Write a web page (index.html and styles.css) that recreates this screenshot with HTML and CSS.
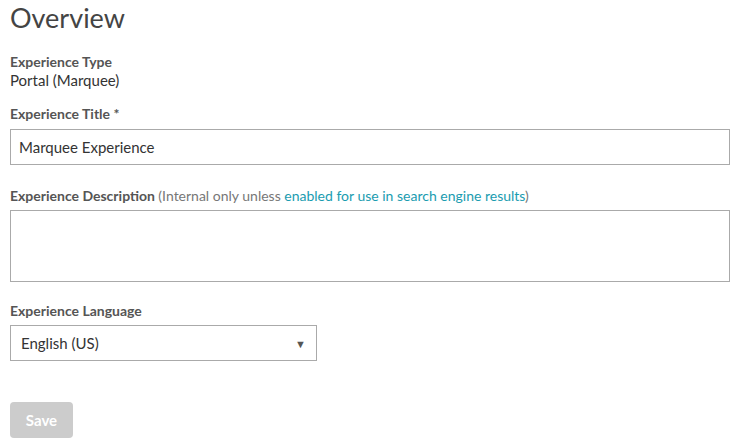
FILE: index.html
```html
<!DOCTYPE html>
<html>
<head>
<meta charset="utf-8">
<link rel="stylesheet" href="styles.css">
</head>
<body>
<div class="page">
  <h1 class="title">Overview</h1>
  <div class="field static">
    <div class="label">Experience Type</div>
    <div class="value">Portal (Marquee)</div>
  </div>
  <div class="field">
    <div class="label">Experience Title *</div>
    <div class="input">Marquee Experience</div>
  </div>
  <div class="field">
    <div class="label tight">Experience Description <span class="hint">(Internal only unless <span class="link">enabled for use in search engine results</span>)</span></div>
    <div class="textarea"></div>
  </div>
  <div class="field">
    <div class="label tight">Experience Language</div>
    <div class="select"><span>English (US)</span><span class="caret">▼</span></div>
  </div>
  <div class="actions">
    <button class="btn">Save</button>
  </div>
</div>
</body>
</html>
```
FILE: styles.css
```css
* { box-sizing: border-box; }
html, body { margin: 0; padding: 0; background: #fff; }
body { font-family: Lato, "Open Sans", sans-serif; color: #333; }
.page { padding: 0 9px 0 10px; display: flex; flex-direction: column; }
.title { margin: 0; font-weight: 400; font-size: 27px; line-height: 34px; color: #444; margin-top: 1px; }
.field { display: flex; flex-direction: column; }
.static { margin-top: 17px; }
.label { font-size: 14px; font-weight: 700; color: #555; line-height: 19px; margin-bottom: 6px; }
.label.tight { margin-bottom: 5px; }
.static .label { margin-bottom: 0; }
.value { font-size: 15px; color: #333; line-height: 19px; margin-bottom: 14px; }
.hint { font-weight: 400; color: #777; font-size: 14px; }
.link { color: #1a9cb0; }
.input { height: 36px; border: 1px solid #aaa; font-size: 15px; padding: 0 8px; display: flex; align-items: center; color: #333; margin-bottom: 21px; }
.textarea { height: 72px; border: 1px solid #aaa; margin-bottom: 19px; }
.select { width: 307px; height: 36px; border: 1px solid #aaa; font-size: 15px; padding: 0 10px; display: flex; align-items: center; justify-content: space-between; color: #333; }
.caret { font-size: 11px; color: #555; }
.actions { margin-top: 41px; }
.btn { width: 63px; height: 36px; border: none; border-radius: 4px; background: #ccc; color: #fff; font-family: Lato, sans-serif; font-weight: 700; font-size: 15px; padding: 0; }
```
